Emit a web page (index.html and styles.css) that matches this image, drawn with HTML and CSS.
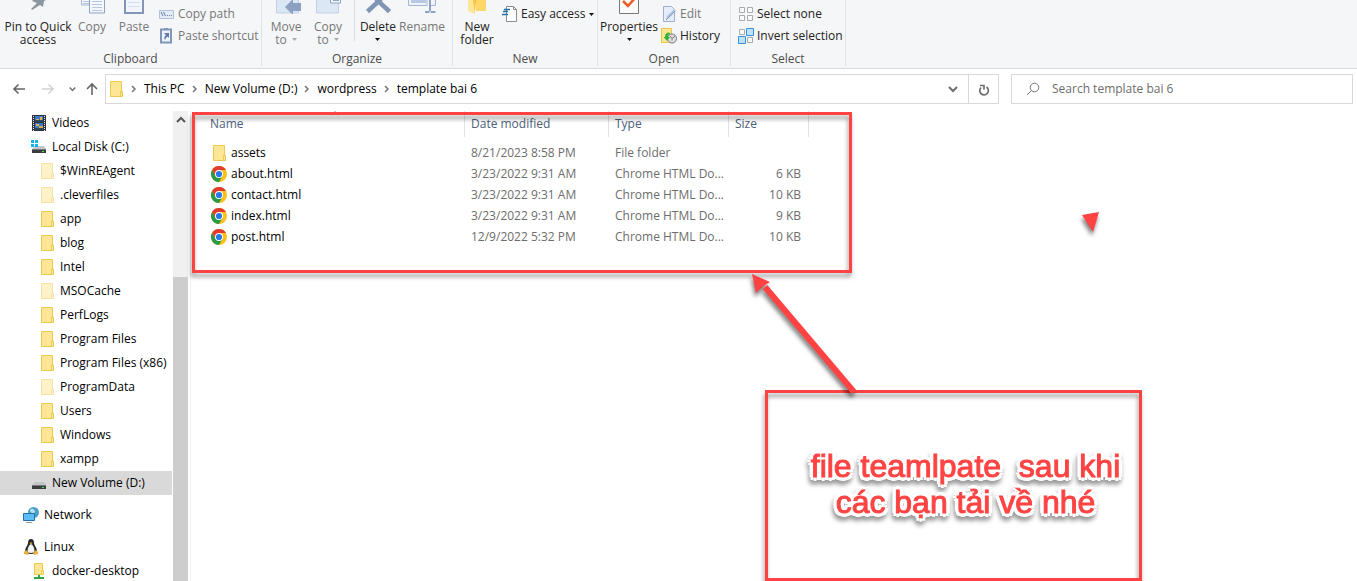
FILE: index.html
```html
<!DOCTYPE html>
<html lang="en">
<head>
<meta charset="utf-8">
<title>template bai 6</title>
<link rel="stylesheet" href="styles.css">
</head>
<body>
<svg class="defs" aria-hidden="true">
  <symbol id="folder" viewBox="0 0 16 16"><path d="M2.5.5h11v15h-11z" fill="#ffe694" stroke="#ecc94f"/><path d="M12.5 10.5h2v5h-2z" fill="#ffe694" stroke="#ecc94f"/></symbol>
  <symbol id="chrome" viewBox="0 0 16 16"><circle cx="8" cy="8" r="8" fill="#fbc116"/><path d="M8 8V4h6.93A8 8 0 0 0 1.07 4L4.5 10z" fill="#e33b2e"/><path d="M4.5 10 1.07 4A8 8 0 0 0 8 16l3.5-6z" fill="#2b9a48"/><circle cx="8" cy="8" r="4" fill="#fff"/><circle cx="8" cy="8" r="3.1" fill="#2a79e8"/></symbol>
  <symbol id="crumb" viewBox="0 0 6 8"><path d="m1 1 3 3-3 3" fill="none" stroke="#777" stroke-width="1.5"/></symbol>
  <symbol id="down" viewBox="0 0 10 8"><path d="m1 2 4 4 4-4" fill="none" stroke="#6e6e6e" stroke-width="2"/></symbol>
  <symbol id="caret" viewBox="0 0 5 3"><path d="M0 0h5L2.500 3z" fill="currentColor"/></symbol>
  <symbol id="drive" viewBox="0 0 16 16"><path d="m3 8 1-1h9l2 3H1z" fill="#c3c6c8"/><path d="M1 10h14v4H1z" fill="#3b3e40"/><path d="M1 10h14v1H1z" fill="#777"/><path d="M11 12h2v1h-2z" fill="#3df03d"/></symbol>
</svg>

<header class="ribbon">
  <section class="group clipboard">
    <div class="tools">
      <button class="big wide"><svg class="pic" width="20" height="14" viewBox="0 0 20 14"><path d="M5 0h13l-2 1-1 6-3-2-8 5-1-1 6-6-5-2z" fill="#8d979f"/></svg><span>Pin to Quick<br>access</span></button>
      <button class="big off"><svg class="pic" width="26" height="14" viewBox="0 0 26 14"><path d="M2.500-1h12v6h-12z" fill="#f4f8fd" stroke="#a5b5d3"/><path d="M4 1.500h6M4 3.500h6" stroke="#b4c6e2"/><path d="M10.500-1h15v14h-15z" fill="#f4f8fd" stroke="#8fa2c4"/><path d="M13 1.500h10M13 4.500h10M13 7.500h10M13 10.500h10" stroke="#b4c6e2"/></svg><span>Copy</span></button>
      <button class="big off"><svg class="pic" width="22" height="14" viewBox="0 0 22 14"><path d="M2-1h18v14H2z" fill="#f2f6fc" stroke="#8295b9" stroke-width="2"/><path d="M5 2.500h12M5 6.500h12" stroke="#d3dff0"/></svg><span>Paste</span></button>
      <div class="stack">
        <button class="small off"><svg width="16" height="16" viewBox="0 0 16 16"><path d="M.5 4.500h14v8H.5z" fill="#e3ebf7" stroke="#b4c3dc"/><path d="m2 6 2 4M4.500 6l2 4M8 9.500h1M10 9.500h1M12 9.500h1" stroke="#6a7fa8"/></svg>Copy path</button>
        <button class="small off"><svg width="16" height="16" viewBox="0 0 16 16"><path d="M2 1.500h10v13H2z" fill="#eef3fb" stroke="#8295b9" stroke-width="2"/><path d="M5 0h4v2H5z" fill="#8295b9"/><path d="M5 5h5v5L8.500 8.500C7 9.500 6.500 10.500 6 12 4.500 10 5.500 8 7 7z" fill="#5e78aa"/></svg>Paste shortcut</button>
      </div>
    </div>
    <h2>Clipboard</h2>
  </section>
  <section class="group organize">
    <div class="tools">
      <button class="big off"><svg class="pic" width="32" height="14" viewBox="0 0 32 14"><path d="M6.500-1h22v14h-22z" fill="#dce7f6" stroke="#c3d1e6"/><path d="m15 7 8-8v4h8v8h-8v4z" fill="#8ca0c2"/></svg><span>Move<br>to <svg class="caret" width="5" height="3"><use href="#caret"/></svg></span></button>
      <button class="big off"><svg class="pic" width="32" height="14" viewBox="0 0 32 14"><path d="M4.500-1h22v14h-22z" fill="#dce7f6" stroke="#c3d1e6"/><path d="M18.500-1h10v4h-10z" fill="#f4f8fd" stroke="#8fa2c4"/><path d="M21 .5h6" stroke="#8fa2c4"/></svg><span>Copy<br>to <svg class="caret" width="5" height="3"><use href="#caret"/></svg></span></button>
      <span class="rule"></span>
      <button class="big"><svg class="pic" width="26" height="14" viewBox="0 0 26 14"><path d="M2.500 11.500 16-1M24.500 11.500 11-1" stroke="#8295b5" stroke-width="4.500"/></svg><span>Delete<br><svg class="caret" width="5" height="3"><use href="#caret"/></svg></span></button>
      <button class="big mid off"><svg class="pic" width="30" height="14" viewBox="0 0 30 14"><path d="M20-1v6.500H1.500V-1M24 5.500h4.500V-1" fill="#edf3fb" stroke="#a5b5d3"/><path d="M4 0h15v3H4z" fill="#b9c9e2"/><path d="M23 0v11M18 12h4.500M23.500 12h5" stroke="#8fa2c4" stroke-width="2"/></svg><span>Rename</span></button>
    </div>
    <h2>Organize</h2>
  </section>
  <section class="group new">
    <div class="tools">
      <button class="big"><svg class="pic" width="24" height="14" viewBox="0 0 24 14"><path d="M3 0h7v14l-7-3z" fill="#ffe695"/><path d="M9 0h12v11H11z" fill="#ffd668"/><path d="m8 0 2 14V5l2-5z" fill="#f4c64b"/></svg><span>New<br>folder</span></button>
      <div class="stack">
        <button class="small"><svg width="16" height="16" viewBox="0 0 16 16"><path d="M4.500.5h7l3 3v12h-10z" fill="#fff" stroke="#8b8b8b"/><path d="M11.500.5v3h3" fill="none" stroke="#8b8b8b"/><path d="M2 3.500h6M1 5.500h5M0 8.500h6" stroke="#2473ab" stroke-width="1.500"/></svg>Easy access<svg class="caret" width="5" height="3"><use href="#caret"/></svg></button>
      </div>
    </div>
    <h2>New</h2>
  </section>
  <section class="group open">
    <div class="tools">
      <button class="big prop"><svg class="pic" width="24" height="14" viewBox="0 0 24 14"><path d="M2.500-1h19v14.500h-19z" fill="#fafafa" stroke="#777"/><path d="m6 1 5 5 7-8" fill="none" stroke="#ef5a22" stroke-width="2.500"/></svg><span>Properties<br><svg class="caret" width="5" height="3"><use href="#caret"/></svg></span></button>
      <div class="stack">
        <button class="small off"><svg width="16" height="16" viewBox="0 0 16 16"><path d="M2.500.5h8l3 3v12h-11z" fill="#e4edf9" stroke="#9fb0cf"/><path d="m5 13 1-3 7-7 2 2-7 7z" fill="#b7c6e0"/><path d="m5 14 9-9" stroke="#7f94ba"/></svg>Edit</button>
        <button class="small"><svg width="16" height="16" viewBox="0 0 16 16"><path d="M.5.500h10v14H.5z" fill="#ffe694" stroke="#e9c54c"/><circle cx="11" cy="10.500" r="4.500" fill="#dfe2e4" stroke="#777"/><path d="m9 8 2 2.500L14 8M11 10.500v2" fill="none" stroke="#777"/><path d="M8 4.500C5 4.500 4 7 4 9H2.500L6 13l3-4H7c0-2 .5-3 2.500-3.500z" fill="#33b533"/></svg>History</button>
      </div>
    </div>
    <h2>Open</h2>
  </section>
  <section class="group select">
    <div class="tools">
      <div class="stack">
        <button class="small"><svg width="16" height="16" viewBox="0 0 16 16"><path d="M1.500 1.500h5v5h-5zM9.500 1.500h5v5h-5zM1.500 9.500h5v5h-5zM9.500 9.500h5v5h-5z" fill="#fafafa" stroke="#aaa"/></svg>Select none</button>
        <button class="small"><svg width="16" height="16" viewBox="0 0 16 16"><path d="M1.500 1.500h5v5h-5zM9.500 9.500h5v5h-5z" fill="#fafafa" stroke="#aaa"/><path d="M8.500.5h7v7h-7zM.5 8.500h7v7h-7z" fill="#bfe3fd" stroke="#3391df"/></svg>Invert selection</button>
      </div>
    </div>
    <h2>Select</h2>
  </section>
</header>

<nav class="bar">
  <div class="moves">
    <button aria-label="Back"><svg width="14" height="12" viewBox="0 0 14 12"><path d="M13 6H2M6.500 1.500 2 6l4.500 4.500" fill="none" stroke="#666" stroke-width="1.600"/></svg></button>
    <button aria-label="Forward"><svg width="14" height="12" viewBox="0 0 14 12"><path d="M1 6h11M7.500 1.500 12 6l-4.500 4.500" fill="none" stroke="#d2d2d2" stroke-width="1.600"/></svg></button>
    <button class="slim" aria-label="Recent locations"><svg width="7" height="6" viewBox="0 0 10 8"><use href="#down"/></svg></button>
    <button class="slim" aria-label="Up"><svg width="12" height="14" viewBox="0 0 12 14"><path d="M6 13V2M1 7l5-5 5 5" fill="none" stroke="#666" stroke-width="1.600"/></svg></button>
  </div>
  <div class="address">
    <svg class="root" width="16" height="16"><use href="#folder"/></svg>
    <svg class="sep" width="6" height="8"><use href="#crumb"/></svg><a href="#">This PC</a>
    <svg class="sep" width="6" height="8"><use href="#crumb"/></svg><a href="#">New Volume (D:)</a>
    <svg class="sep" width="6" height="8"><use href="#crumb"/></svg><a href="#">wordpress</a>
    <svg class="sep" width="6" height="8"><use href="#crumb"/></svg><a href="#">template bai 6</a>
    <button class="drop" aria-label="Previous locations"><svg width="10" height="8"><use href="#down"/></svg></button>
    <button class="reload" aria-label="Refresh"><svg width="12" height="12" viewBox="0 0 12 12"><path d="M8.500 3A4.300 4.300 0 1 1 3 3.500" fill="none" stroke="#6e6e6e" stroke-width="1.700"/><path d="M2 1.500h4v4" fill="none" stroke="#6e6e6e" stroke-width="1.700"/></svg></button>
  </div>
  <label class="search">
    <svg width="14" height="14" viewBox="0 0 14 14"><circle cx="8.500" cy="5.500" r="4.300" fill="none" stroke="#777"/><path d="M5.500 8.500 1 13" stroke="#777"/></svg>
    <input type="search" placeholder="Search template bai 6" aria-label="Search template bai 6">
  </label>
</nav>

<main class="main">
  <aside class="side">
    <ul class="tree">
      <li class="l2"><a href="#"><svg width="16" height="16" viewBox="0 0 16 16"><path d="M1 0h14v16H1z" fill="#30343a"/><path d="M4 1h8v6H4zM4 8h8v7H4z" fill="#3b78cf"/><path d="M5 4h3v3H5zM8 11h4v4H8z" fill="#d9b046"/><path d="M4 5h8v2H4zM4 13h8v2H4z" fill="#2c4a5c"/><path d="M9 2h2v3H9zM5 9h3v2H5z" fill="#e0b84a"/><path d="M2.500 1v15M13.500 1v15" stroke="#e8e8e8" stroke-dasharray="1 1"/></svg>Videos</a></li>
      <li class="l2"><a href="#"><svg width="16" height="16" viewBox="0 0 16 16"><use href="#drive"/><path d="M0 1h3v3H0zM4 1h3v3H4zM0 5h3v3H0zM4 5h3v3H4z" fill="#10b4f0"/></svg>Local Disk (C:)</a></li>
      <li class="l3 dim"><a href="#"><svg width="16" height="16"><use href="#folder"/></svg>$WinREAgent</a></li>
      <li class="l3 dim"><a href="#"><svg width="16" height="16"><use href="#folder"/></svg>.cleverfiles</a></li>
      <li class="l3"><a href="#"><svg width="16" height="16"><use href="#folder"/></svg>app</a></li>
      <li class="l3"><a href="#"><svg width="16" height="16"><use href="#folder"/></svg>blog</a></li>
      <li class="l3"><a href="#"><svg width="16" height="16"><use href="#folder"/></svg>Intel</a></li>
      <li class="l3 dim"><a href="#"><svg width="16" height="16"><use href="#folder"/></svg>MSOCache</a></li>
      <li class="l3"><a href="#"><svg width="16" height="16"><use href="#folder"/></svg>PerfLogs</a></li>
      <li class="l3"><a href="#"><svg width="16" height="16"><use href="#folder"/></svg>Program Files</a></li>
      <li class="l3"><a href="#"><svg width="16" height="16"><use href="#folder"/></svg>Program Files (x86)</a></li>
      <li class="l3 dim"><a href="#"><svg width="16" height="16"><use href="#folder"/></svg>ProgramData</a></li>
      <li class="l3"><a href="#"><svg width="16" height="16"><use href="#folder"/></svg>Users</a></li>
      <li class="l3"><a href="#"><svg width="16" height="16"><use href="#folder"/></svg>Windows</a></li>
      <li class="l3"><a href="#"><svg width="16" height="16"><use href="#folder"/></svg>xampp</a></li>
      <li class="l2 current"><a href="#"><svg width="16" height="16"><use href="#drive"/></svg>New Volume (D:)</a></li>
      <li class="l1"><a href="#"><svg width="16" height="16" viewBox="0 0 16 16"><circle cx="10.500" cy="5.500" r="5.500" fill="#4b9fc6"/><path d="M7 3c2-2 3-1 4 0s2 2 0 3-4-1-4-3z" fill="#b5e0ee"/><path d="M.5 6.500h11v7H.5z" fill="#5bbcf7" stroke="#236fa6"/><path d="M3 15.500h6" stroke="#8b9cab"/></svg>Network</a></li>
      <li class="l1"><a href="#"><svg width="16" height="16" viewBox="0 0 16 16"><path d="M8 0c2 0 3 1.500 3 4 0 2 3 5 3 8 0 2-2 3-6 3s-6-1-6-3c0-3 3-6 3-8 0-2.500 1-4 3-4z" fill="#25282b"/><path d="M8 5c2 1 3.500 4 3.500 7 0 1-1 2-3.500 2s-3.500-1-3.500-2c0-3 1.500-6 3.500-7z" fill="#f3f3f3"/><path d="m6.500 4 1.500-.8 1.500.8L8 5.200zM1 13l2-2 3 3-1 2-4-1zM15 13l-2-2-3 3 1 2 4-1z" fill="#e9b03a"/></svg>Linux</a></li>
      <li class="l2"><a href="#"><svg width="16" height="16" viewBox="0 0 16 16"><path d="M3.500.5h8v11h-8z" fill="#ffe694" stroke="#ecc94f"/><path d="M10.500 7.500h2v4h-2z" fill="#ffe694" stroke="#ecc94f"/><path d="M7 12h2v2h4v2H3v-2h4z" fill="#30a545"/></svg>docker-desktop</a></li>
    </ul>
    <div class="scroll"><button aria-label="Scroll up"><svg width="10" height="8" viewBox="0 0 10 8"><path d="m1 6 4-4 4 4" fill="none" stroke="#555" stroke-width="2"/></svg></button><div class="thumb"></div></div>
  </aside>
  <div class="files">
    <table>
      <colgroup><col class="c-name"><col class="c-date"><col class="c-type"><col class="c-size"></colgroup>
      <thead><tr><th>Name<svg class="sort" width="8" height="5" viewBox="0 0 8 5"><path d="M0 4.500 4 .500l4 4" fill="none" stroke="#888"/></svg></th><th>Date modified</th><th>Type</th><th>Size</th></tr></thead>
      <tbody>
        <tr><td><a href="#"><svg width="16" height="16"><use href="#folder"/></svg>assets</a></td><td>8/21/2023 8:58 PM</td><td>File folder</td><td></td></tr>
        <tr><td><a href="#"><svg width="16" height="16"><use href="#chrome"/></svg>about.html</a></td><td>3/23/2022 9:31 AM</td><td>Chrome HTML Do...</td><td>6 KB</td></tr>
        <tr><td><a href="#"><svg width="16" height="16"><use href="#chrome"/></svg>contact.html</a></td><td>3/23/2022 9:31 AM</td><td>Chrome HTML Do...</td><td>10 KB</td></tr>
        <tr><td><a href="#"><svg width="16" height="16"><use href="#chrome"/></svg>index.html</a></td><td>3/23/2022 9:31 AM</td><td>Chrome HTML Do...</td><td>9 KB</td></tr>
        <tr><td><a href="#"><svg width="16" height="16"><use href="#chrome"/></svg>post.html</a></td><td>12/9/2022 5:32 PM</td><td>Chrome HTML Do...</td><td>10 KB</td></tr>
      </tbody>
    </table>
  </div>
</main>

<div class="frame"></div>
<div class="callout"><p>file teamlpate  sau khi
các bạn tải về nhé</p></div>
<svg class="marks" width="360" height="200" viewBox="0 0 360 200" aria-hidden="true">
  <path d="M104 121 15 16" stroke="#ff4343" stroke-width="6"/>
  <path d="m2 3 18 8-5 3-6 5-3 3z" fill="#ff4343"/>
</svg>
<svg class="pointer" width="18" height="20" viewBox="0 0 18 20" aria-hidden="true"><path d="M0 3 17 0l-6 20z" fill="#ff4343"/></svg>
</body>
</html>
```
FILE: styles.css
```css
* { box-sizing: border-box; }

body {
  margin: 0;
  height: 100vh;
  display: flex;
  flex-direction: column;
  position: relative;
  overflow: hidden;
  background: #fff;
  color: #000;
  font: 12px/16px "Open Sans", "Noto Sans", sans-serif;
}

button, input { font: inherit; color: inherit; }
button { padding: 0; border: 0; background: none; white-space: nowrap; }
a { color: inherit; text-decoration: none; white-space: nowrap; }
svg { flex: none; overflow: hidden; }
.defs { position: absolute; width: 0; height: 0; }

/* Ribbon */
.ribbon {
  display: flex;
  flex: none;
  padding-bottom: 2px;
  background: #f5f6f7;
  border-bottom: 1px solid #d9dadc;
}
.group {
  display: flex;
  flex-direction: column;
  border-right: 1px solid #e2e3e4;
  color: #222;
}
.group h2 {
  margin: 0;
  font-size: 12px;
  font-weight: 400;
  line-height: 14px;
  text-align: center;
  color: #4c4c4c;
}
.clipboard { width: 262px; padding-left: 5px; padding-right: 5px; }
.organize { width: 191px; padding-left: 3px; padding-right: 3px; }
.new { width: 145px; padding-left: 3px; padding-right: 3px; }
.open { width: 133px; padding-left: 3px; padding-right: 3px; }
.select { width: 115px; padding-left: 3px; padding-right: 3px; }
.tools { display: flex; height: 49px; margin-bottom: 3px; }
.big {
  width: 42px;
  display: flex;
  flex: none;
  flex-direction: column;
  align-items: center;
  line-height: 13px;
}
.big.wide { width: 66px; }
.big.mid { width: 46px; }
.big.prop { width: 56px; }
.big .pic { margin-bottom: 6px; height: 14px; }
.off { color: #777; }
.caret { color: #111; }
.big .caret { vertical-align: 3px; }
.off .caret { margin-left: 2px; color: #aaa; }
.rule { width: 1px; height: 41px; margin: 0 2px 0 5px; background: #dcdddf; }
.stack { padding: 3px 0 0 4px; display: flex; flex-direction: column; }
.small {
  display: flex;
  align-items: center;
  gap: 3px;
  height: 22px;
}

/* Navigation bar */
.bar {
  display: flex;
  flex: none;
  padding: 5px 4px 7px 4px;
}
.moves { display: flex; width: 101px; }
.moves button { width: 29px; display: grid; place-items: center; }
.moves .slim { width: 20px; }
.address, .search {
  display: flex;
  align-items: center;
  height: 30px;
  border: 1px solid #d9d9d9;
}
.address { flex: 892 1 0; }
.search { flex: 326 1 0; margin-left: 12px; padding-left: 14px; gap: 12px; }
.root { margin-left: 2px; }
.sep { margin: 0 7px; }
.drop { margin-left: auto; width: 30px; }
.reload { width: 30px; height: 100%; border-left: 1px solid #d9d9d9; }
.reload svg { vertical-align: middle; }
.search input {
  flex: 1;
  min-width: 0;
  padding: 0;
  border: 0;
  outline: 0;
  background: none;
}
.search input::placeholder { color: #6d6d6d; opacity: 1; }

/* Body */
.main { display: flex; flex: 1; min-height: 0; overflow: hidden; }
.side { display: flex; flex: none; width: 191px; border-right: 1px solid #f0f0f0; }
.tree { list-style: none; width: 172px; margin: 0 1px 0 0; padding: 0; }
.tree a { display: flex; align-items: center; gap: 5px; height: 24px; }
.l1 { padding-left: 23px; margin-top: 8px; }
.l2 { padding-left: 31px; }
.l3 { padding-left: 39px; }
.dim svg { opacity: 0.5; }
.current { background: #d9d9d9; }
.scroll {
  display: flex;
  flex-direction: column;
  width: 15px;
  background: #f0f0f0;
}
.scroll button { height: 166px; display: flex; justify-content: center; padding-top: 5px; }
.thumb { flex: 1; background: #cdcdcd; }

.files { flex: 1; }
table { width: 618px; table-layout: fixed; border-collapse: separate; border-spacing: 0; }
.c-name { width: 274px; }
.c-date { width: 144px; }
.c-type { width: 120px; }
.c-size { width: 80px; }
th {
  height: 26px;
  padding: 0 0 0 6px;
  border-right: 1px solid #e2e2e2;
  font-weight: 400;
  text-align: left;
  color: #4c607a;
}
th:first-child { padding-left: 19px; position: relative; }
.sort { position: absolute; left: 140px; top: 0; }
tbody::before { content: ""; display: block; height: 5px; }
td { height: 21px; padding: 0 0 0 6px; color: #6d6d6d; white-space: nowrap; }
td:first-child { padding-left: 20px; color: #000; }
td:last-child { padding-right: 8px; text-align: right; }
td a { display: flex; align-items: center; gap: 4px; }

/* Annotations drawn over the window */
.frame, .callout {
  position: absolute;
  border: 3px solid #ff4343;
  filter: drop-shadow(-1px 4px 2px rgba(0, 0, 0, 0.4));
}
.frame { left: 192px; top: 112px; width: 660px; height: 161px; }
.callout {
  left: 765px;
  top: 390px;
  width: 377px;
  height: 191px;
  display: flex;
  align-items: center;
  justify-content: center;
  padding: 0 0 4px 24px;
}
.callout p {
  margin: 0;
  font: 32px/36px "Liberation Sans", Arial, sans-serif;
  white-space: pre;
  text-align: center;
  color: #ff4343;
  -webkit-text-stroke: 1px #ff4343;
  text-shadow:
    4px 0 #fff, -4px 0 #fff, 0 4px #fff, 0 -4px #fff,
    3px 3px #fff, -3px 3px #fff, 3px -3px #fff, -3px -3px #fff,
    2px 0 #fff, -2px 0 #fff, 0 2px #fff, 0 -2px #fff;
}
.marks, .pointer { position: absolute; filter: drop-shadow(-1px 4px 2px rgba(0, 0, 0, 0.5)); }
.marks { left: 750px; top: 271px; }
.pointer { left: 1082px; top: 212px; }
```
